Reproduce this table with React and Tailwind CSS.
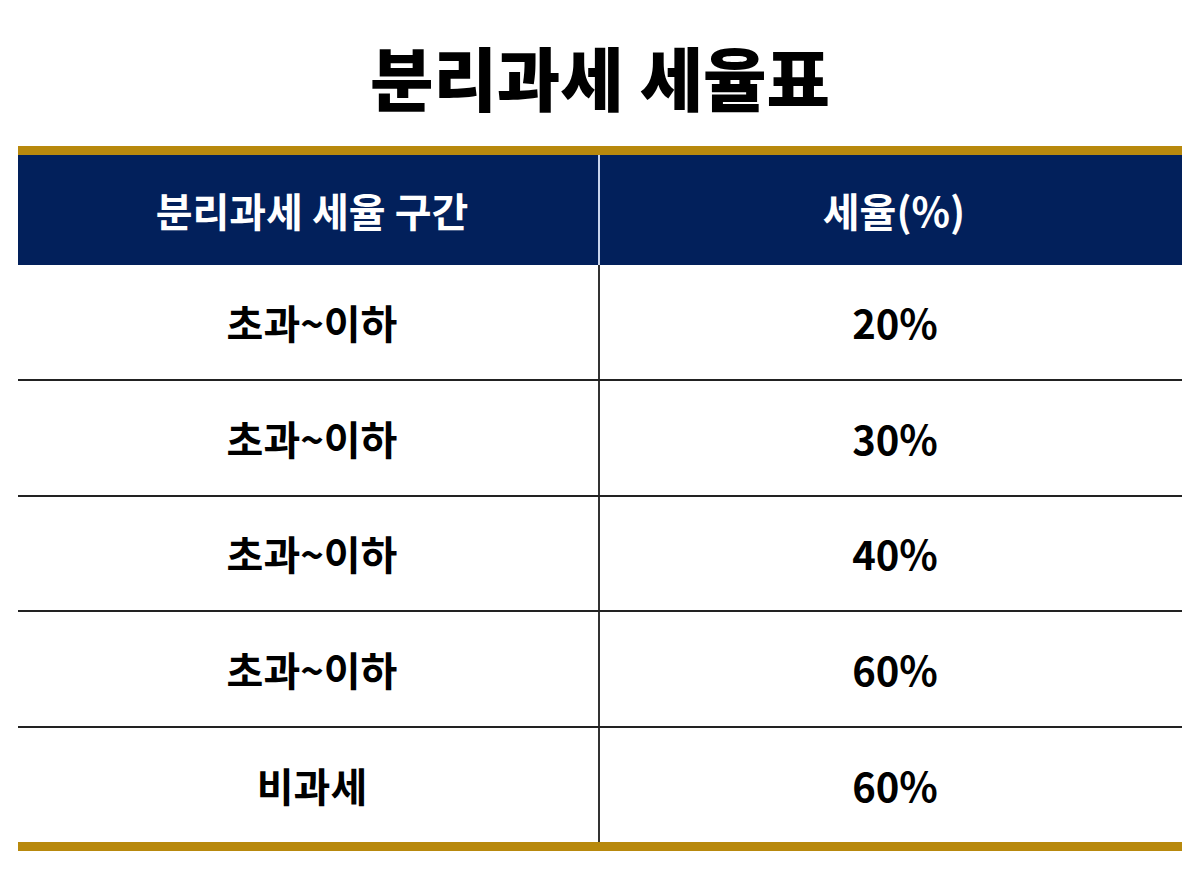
import React from 'react';

const rows = [
  { range: '초과~이하', rate: '20%' },
  { range: '초과~이하', rate: '30%' },
  { range: '초과~이하', rate: '40%' },
  { range: '초과~이하', rate: '60%' },
  { range: '비과세', rate: '60%' },
];

const font = { fontFamily: '"Noto Sans CJK KR", "Noto Sans", sans-serif' };

export default function App() {
  return (
    <div className="w-[1200px] h-[896px] bg-white" style={font}>
      <div className="h-[146px] flex items-center justify-center pt-[6px]">
        <h1 className="text-[69px] leading-none font-black text-black">분리과세 세율표</h1>
      </div>

      <div className="mx-[18px]">
        <div className="h-[9px] bg-[#b8890d]" />

        {/* header */}
        <div className="h-[110px] bg-[#02205b] grid grid-cols-2 text-white font-bold text-[40px]">
          <div className="flex items-center justify-center pl-[8px] border-r-2 border-[#c8d4ec]">분리과세 세율 구간</div>
          <div className="flex items-center justify-center pl-[6px]">세율(%)</div>
        </div>

        {/* body */}
        <div className="h-[577px] flex flex-col">
          {rows.map((r, i) => (
            <div
              key={i}
              className={`flex-1 grid grid-cols-2 text-[40px] font-bold text-black ${i < rows.length - 1 ? 'border-b-2 border-[#222222]' : ''}`}
            >
              <div className="flex items-center justify-center pl-[8px] border-r-2 border-[#333333]">{r.range}</div>
              <div className="flex items-center justify-center pl-[8px]">{r.rate}</div>
            </div>
          ))}
        </div>

        <div className="h-[9px] bg-[#b8890d]" />
      </div>
    </div>
  );
}
